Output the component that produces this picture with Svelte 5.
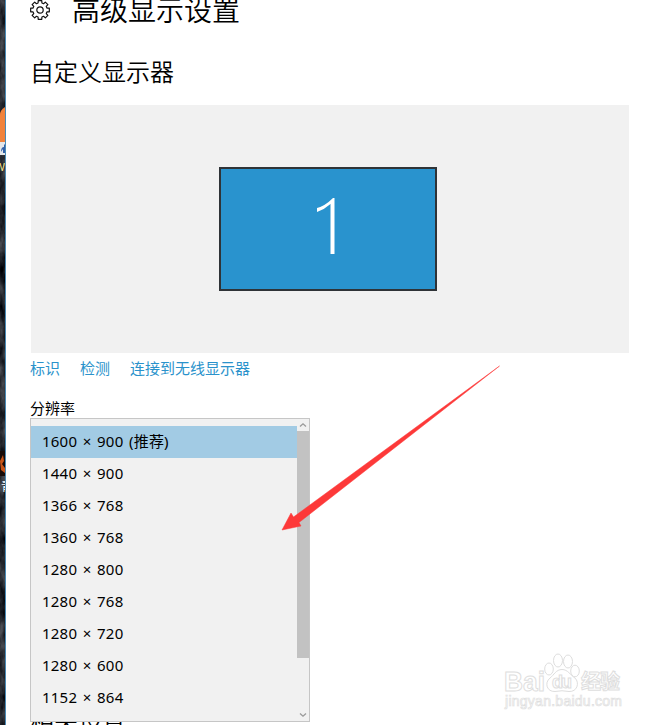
<script lang="ts">
	const links = ['标识', '检测', '连接到无线显示器'];

	const resolutions = [
		'1600 × 900 (推荐)',
		'1440 × 900',
		'1366 × 768',
		'1360 × 768',
		'1280 × 800',
		'1280 × 768',
		'1280 × 720',
		'1280 × 600',
		'1152 × 864'
	];

	let selected = $state(0);

	// Gear outline: eight teeth around a 10px centre
	const teeth = 8;
	const gear = Array.from({ length: teeth }, (_, i) => {
		const a = (i * 2 * Math.PI) / teeth - Math.PI / 2;
		return [
			[-0.27, 7.2],
			[-0.19, 9.5],
			[0.19, 9.5],
			[0.27, 7.2]
		]
			.map(([d, r]) => `${(10 + r * Math.cos(a + d)).toFixed(2)},${(10 + r * Math.sin(a + d)).toFixed(2)}`)
			.join(' ');
	}).join(' ');
</script>

<div class="screen">
	<!-- Strip of the desktop left of the window -->
	<div class="desktop">
		<svg class="wallpaper" viewBox="0 0 5 725" preserveAspectRatio="none">
			<filter id="grain" x="0" y="0" width="100%" height="100%" color-interpolation-filters="sRGB">
				<feTurbulence type="fractalNoise" baseFrequency="0.13 0.05" numOctaves="4" seed="7" />
				<feColorMatrix
					values="0.5 0 0 0 -0.1  0.5 0 0 0 -0.09  0.5 0 0 0 -0.065  0 0 0 0 1"
				/>
			</filter>
			<rect width="5" height="725" filter="url(#grain)" />
			<path d="M5 107 Q0 110 0 115 V142 H5 Z" fill="#f1823b" />
			<rect y="142" width="5" height="13" fill="#e3e6e9" />
			<path d="M1 152 Q1 147 4 147 V144 L5 145 V153 H3 V149 Z" fill="#315fa7" />
			<rect y="451" width="5" height="25" fill="#180b08" />
			<path d="M0 461 L3 455 L4 461 L2 464 L5 468 V473 L1 470 Z" fill="#c75519" />
		</svg>
		<span class="label first">W</span>
		<span class="label second">青</span>
	</div>

	<main>
		<header>
			<svg class="gear" viewBox="0 0 20 20">
				<polygon points={gear} />
				<circle cx="10" cy="10" r="3.2" />
			</svg>
			<h1>高级显示设置</h1>
		</header>

		<h2>自定义显示器</h2>

		<section class="preview">
			<div class="monitor">
				<svg viewBox="0 0 20 60" aria-label="1">
					<path d="M0 10 Q8 8 16 0 H17.500 V56 H13.500 V6 Q8 11 0 14 Z" />
				</svg>
			</div>
		</section>

		<nav>
			{#each links as link}
				<a href="#top">{link}</a>
			{/each}
		</nav>

		<div class="field-label">分辨率</div>
		<div class="dropdown">
			<ul>
				{#each resolutions as resolution, i}
					<li>
						<button class:selected={selected === i} onclick={() => (selected = i)}>{resolution}</button>
					</li>
				{/each}
			</ul>
			<div class="scrollbar">
				<svg viewBox="0 0 12 12"><path d="M3 7.5 L6 4.8 L9 7.5" /></svg>
				<div class="thumb"></div>
				<svg class="down" viewBox="0 0 12 12"><path d="M3 4.5 L6 7.2 L9 4.5" /></svg>
			</div>
		</div>
		<h2 class="next">相关设置</h2>
	</main>

	<!-- Pointer to the list -->
	<svg class="arrow" viewBox="0 0 658 725">
		<path d="M499.500 366 L299 522.500 L301 526 L282 530 L291 513 L293.500 517 Z" />
	</svg>

	<svg class="watermark" viewBox="0 0 130 64">
		<g class="mark">
			<text x="4" y="42" class="bai" textLength="41" lengthAdjust="spacingAndGlyphs">Bai</text>
			<ellipse cx="49" cy="20" rx="4.300" ry="6" />
			<ellipse cx="58" cy="11.500" rx="4.500" ry="6.500" />
			<ellipse cx="68" cy="12.500" rx="4.500" ry="6.500" />
			<ellipse cx="75" cy="22" rx="4.300" ry="5.800" />
			<path d="M62 20.500 C56 20.500 54 26 50 29 C44 34 47 43 55 42.500 Q62 41 69 42.500 C77 43 80 34 75 29 C70 26 68 20.500 62 20.500 Z" />
			<text x="52" y="39" class="du" textLength="20">du</text>
			<text x="81" y="40" class="cn" textLength="39">经验</text>
			<text x="5" y="57" class="url" textLength="117">jingyan.baidu.com</text>
		</g>
	</svg>
</div>

<style>
	:global(body) {
		background: #fff;
		overflow: hidden;
	}

	.screen {
		position: relative;
		display: flex;
		width: 658px;
		height: 725px;
		overflow: hidden;
		background: #fff;
		color: #000;
		font-family: 'Noto Sans', 'Noto Sans CJK SC', sans-serif;
		font-size: 15px;
	}

	.desktop {
		position: relative;
		width: 5px;
		flex-shrink: 0;
		overflow: hidden;
		border-right: 1px solid #4a8ab5;
		background: #23262b;
	}

	.wallpaper {
		display: block;
		width: 5px;
		height: 725px;
	}

	.label {
		position: absolute;
		color: #fff;
		font-size: 12px;
		line-height: 14px;
	}

	.first {
		top: 160px;
		right: 0;
		color: #f3e58c;
		font-size: 11px;
	}

	.second {
		top: 480px;
		left: 1px;
	}

	main {
		width: 599px;
		padding-left: 24px;
	}

	header {
		display: flex;
		height: 27px;
	}

	.gear {
		width: 20px;
		height: 20px;
		flex-shrink: 0;
		fill: none;
		stroke: #111;
		stroke-width: 1.2;
		stroke-linejoin: round;
	}

	h1,
	h2 {
		margin: 0;
		font-weight: 350;
		white-space: nowrap;
	}

	h1 {
		margin: -10px 0 0 22px;
		font-size: 28px;
		line-height: 40px;
	}

	h2 {
		margin-top: 27px;
		font-size: 24px;
		line-height: 36px;
	}

	.preview {
		display: flex;
		justify-content: center;
		width: 598px;
		height: 248px;
		margin: 15px 0 0 1px;
		background: #f1f1f1;
	}

	.monitor {
		box-sizing: border-box;
		width: 218px;
		height: 124px;
		margin: 62px 4px 0 0;
		border: 2px solid #2f3337;
		background: #2993ce;
	}

	.monitor svg {
		display: block;
		width: 20px;
		height: 60px;
		margin: 29px 0 0 96px;
		fill: #fff;
	}

	nav {
		display: flex;
		gap: 20px;
		height: 32px;
		line-height: 30px;
	}

	a {
		color: #2a92cb;
		text-decoration: none;
	}

	.field-label {
		height: 33px;
		line-height: 47px;
	}

	.dropdown {
		position: relative;
		z-index: 1;
		box-sizing: border-box;
		display: flex;
		width: 280px;
		height: 304px;
		border: 1px solid #c6c6c6;
		background: #f1f1f1;
	}

	ul {
		flex: 1;
		margin: 0;
		padding: 7px 0;
		list-style: none;
	}

	button {
		display: block;
		width: 100%;
		height: 32px;
		padding: 0 0 1px 11px;
		border: none;
		background: none;
		color: #000;
		font: inherit;
		line-height: 31px;
		text-align: left;
		word-spacing: 1.4px;
		letter-spacing: 0.22px;
	}

	button.selected {
		background: #a2cbe4;
	}

	.scrollbar {
		display: flex;
		flex-direction: column;
		width: 12px;
	}

	.scrollbar svg {
		width: 12px;
		height: 12px;
		fill: none;
		stroke: #999;
		stroke-width: 1.3;
	}

	.scrollbar .down {
		margin-top: auto;
	}

	.thumb {
		height: 227px;
		background: #c2c2c2;
	}

	.next {
		margin-top: -19px;
	}

	.arrow {
		position: absolute;
		z-index: 2;
		inset: 0;
		width: 658px;
		height: 725px;
		fill: #fd3939;
		stroke: #fd3939;
		stroke-width: 0.5;
		pointer-events: none;
	}

	.watermark {
		position: absolute;
		left: 500px;
		top: 649px;
		width: 130px;
		height: 64px;
	}

	.mark {
		fill: #fff;
		stroke: #dedede;
		stroke-width: 1;
	}

	.bai {
		font: bold 27px 'Liberation Sans', sans-serif;
	}

	.du {
		font: bold 18px 'Liberation Sans', sans-serif;
	}

	.cn {
		font: bold 20px 'Noto Sans CJK SC', sans-serif;
	}

	.url {
		font: 14px 'Liberation Sans', sans-serif;
		stroke-width: 0.7;
	}
</style>
